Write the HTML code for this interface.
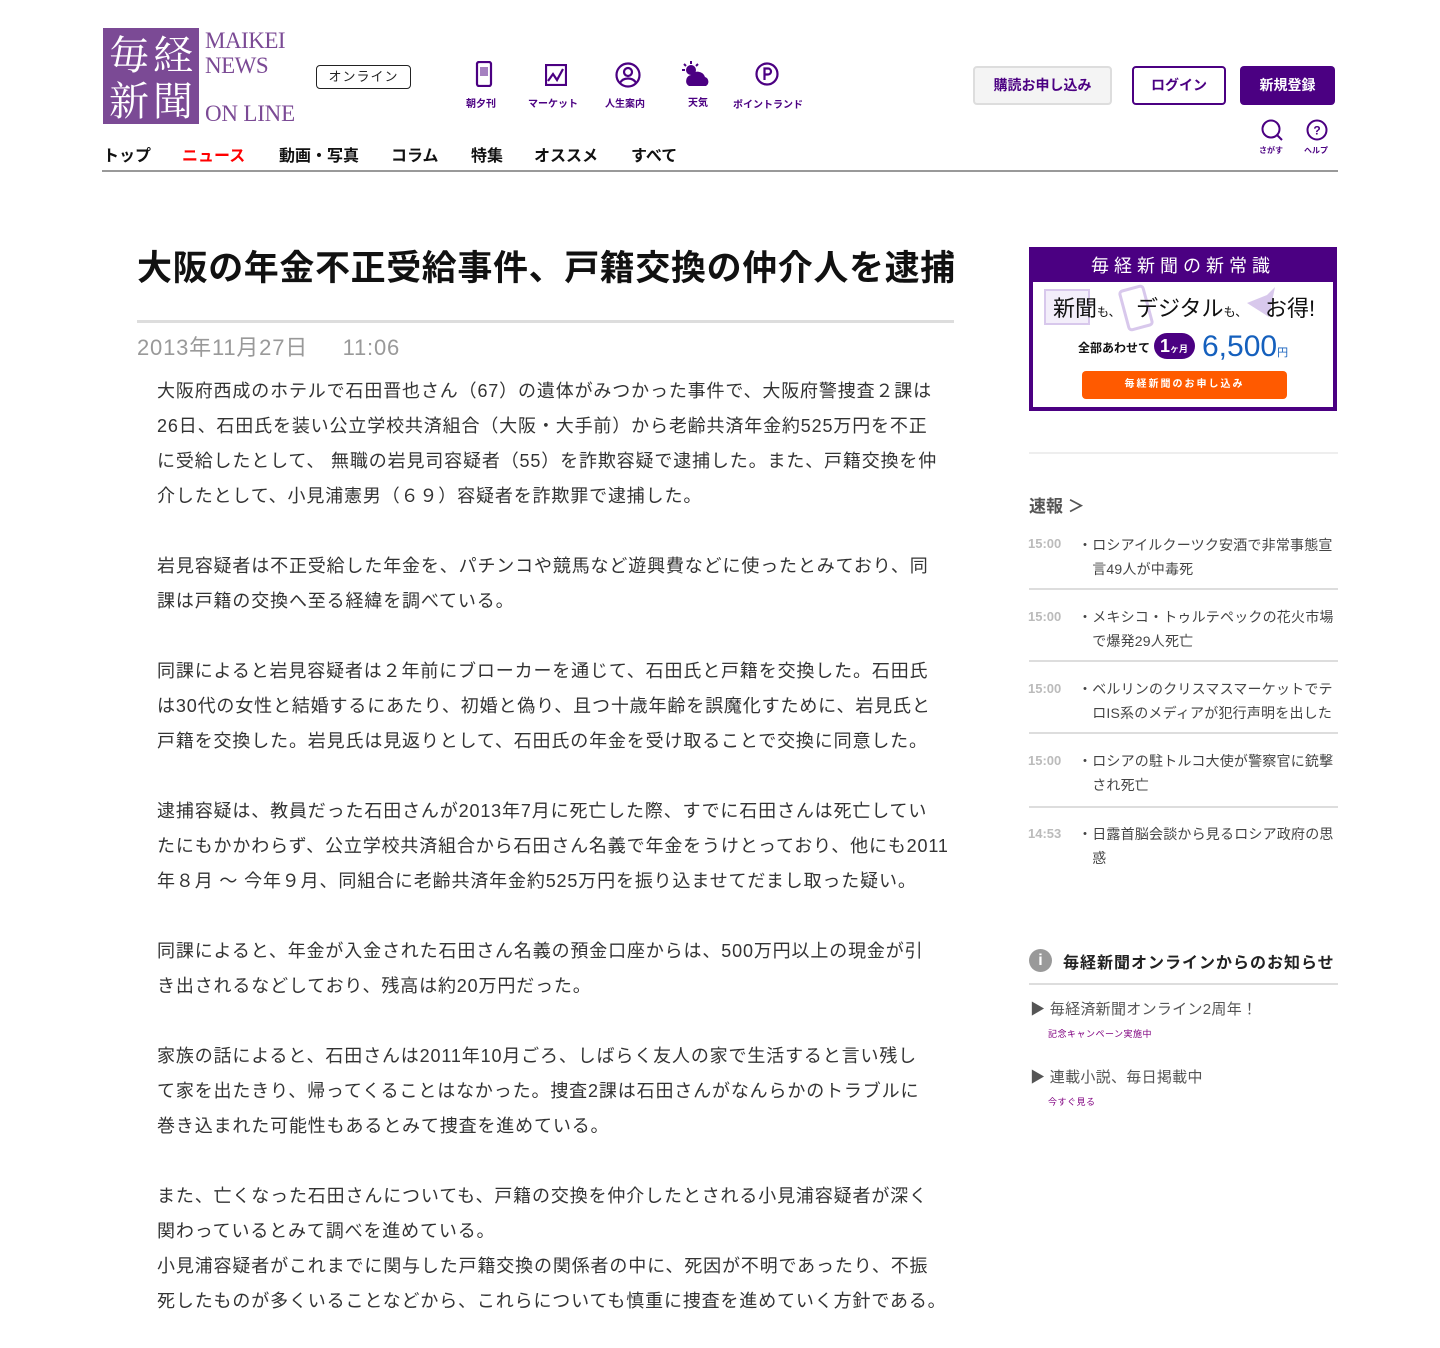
<!DOCTYPE html>
<html><head><meta charset="utf-8"><style>
*{margin:0;padding:0;box-sizing:border-box}
body{width:1440px;height:1348px;background:#fff;font-family:"Liberation Sans","Noto Sans CJK JP",sans-serif;position:relative;overflow:hidden;color:#222}
.a{position:absolute;white-space:nowrap}
.p{color:#4b0082}
</style></head><body>
<!-- logo -->
<div class="a" style="left:103px;top:28px;width:96px;height:96px;background:#7b4a95;color:#fff;font-family:'Noto Serif CJK SC',serif;font-size:40px;line-height:46px;padding:2px 0 0 6px;letter-spacing:4px">毎経<br>新聞</div>
<div class="a" style="left:205px;top:28px;font-family:'Liberation Serif',serif;font-size:23px;line-height:25px;color:#7b4a95;letter-spacing:-0.5px">MAIKEI<br>NEWS</div>
<div class="a" style="left:205px;top:101px;font-family:'Liberation Serif',serif;font-size:23px;color:#7b4a95;letter-spacing:-0.2px">ON LINE</div>
<div class="a" style="left:316px;top:65px;width:95px;height:24px;border:1px solid #222;border-radius:4px;font-size:13px;text-align:center;line-height:22px;letter-spacing:1px">オンライン</div>
<!-- icons -->
<svg class="a" style="left:474px;top:61px" width="20" height="26" viewBox="0 0 20 26" fill="none" stroke="#4b0082" stroke-width="2.2"><rect x="3" y="1" width="14" height="24" rx="2"/><path d="M7 6v9M9 6v9M11 6v9M13 6v9" stroke-width="1"/></svg>
<svg class="a" style="left:545px;top:64px" width="22" height="22" viewBox="0 0 22 22" fill="none" stroke="#4b0082" stroke-width="2.2"><rect x="1" y="1" width="20" height="20"/><path d="M3 17l5-7 4 6 6-11"/></svg>
<svg class="a" style="left:615px;top:62px" width="26" height="26" viewBox="0 0 26 26" fill="none" stroke="#4b0082" stroke-width="2.2"><circle cx="13" cy="13" r="11.5"/><circle cx="13" cy="10" r="4"/><path d="M5 21c3-6 13-6 16 0"/></svg>
<svg class="a" style="left:681px;top:60px" width="30" height="28" viewBox="0 0 30 28"><circle cx="10" cy="10" r="5" fill="#4b0082"/><path d="M10 1v3M3 4l2 2M1 10h3M17 4l-2 2" stroke="#4b0082" stroke-width="2"/><path d="M8 26a6 6 0 0 1 2-11 8 8 0 0 1 14 2 5 5 0 0 1 1 9z" fill="#4b0082"/></svg>
<svg class="a" style="left:755px;top:62px" width="24" height="24" viewBox="0 0 24 24" fill="none" stroke="#4b0082" stroke-width="2.2"><circle cx="12" cy="12" r="10.5"/><path d="M9.5 18V6.5h3.5a3 3 0 0 1 0 6H9.5"/></svg>
<div class="a p" style="left:466px;top:95px;font-size:10px;font-weight:bold">朝夕刊</div>
<div class="a p" style="left:528px;top:95px;font-size:10px;font-weight:bold">マーケット</div>
<div class="a p" style="left:605px;top:95px;font-size:10px;font-weight:bold">人生案内</div>
<div class="a p" style="left:688px;top:94px;font-size:10px;font-weight:bold">天気</div>
<div class="a p" style="left:733px;top:96px;font-size:10px;font-weight:bold">ポイントランド</div>
<!-- buttons -->
<div class="a" style="left:973px;top:66px;width:139px;height:39px;background:#f4f4f4;border:2px solid #ddd;border-radius:4px;text-align:center;line-height:35px;font-size:14px;font-weight:bold;color:#4b0082">購読お申し込み</div>
<div class="a" style="left:1132px;top:66px;width:94px;height:39px;border:2px solid #4b0082;border-radius:4px;text-align:center;line-height:35px;font-size:14px;font-weight:bold;color:#4b0082">ログイン</div>
<div class="a" style="left:1240px;top:66px;width:95px;height:39px;background:#4b0082;border-radius:4px;text-align:center;line-height:39px;font-size:14px;font-weight:bold;color:#fff">新規登録</div>
<svg class="a" style="left:1261px;top:119px" width="24" height="24" viewBox="0 0 24 24" fill="none" stroke="#4b0082" stroke-width="2"><circle cx="10" cy="10" r="8.5"/><path d="M16 16l5 5"/></svg>
<svg class="a" style="left:1306px;top:119px" width="22" height="22" viewBox="0 0 22 22" fill="none" stroke="#4b0082" stroke-width="2"><circle cx="11" cy="11" r="9.5"/><text x="11" y="15.5" font-size="12" font-weight="bold" text-anchor="middle" fill="#4b0082" stroke="none" font-family="Liberation Sans">?</text></svg>
<div class="a p" style="left:1259px;top:145px;font-size:8px;font-weight:bold">さがす</div>
<div class="a p" style="left:1304px;top:145px;font-size:8px;font-weight:bold">ヘルプ</div>
<!-- nav -->
<div class="a" style="left:103px;top:142px;font-size:16px;font-weight:bold;color:#111">トップ</div>
<div class="a" style="left:182px;top:142px;font-size:16px;font-weight:bold;color:#f00">ニュース</div>
<div class="a" style="left:279px;top:142px;font-size:16px;font-weight:bold;color:#111">動画・写真</div>
<div class="a" style="left:391px;top:142px;font-size:16px;font-weight:bold;color:#111">コラム</div>
<div class="a" style="left:471px;top:142px;font-size:16px;font-weight:bold;color:#111">特集</div>
<div class="a" style="left:534px;top:142px;font-size:16px;font-weight:bold;color:#111">オススメ</div>
<div class="a" style="left:631px;top:142px;font-size:16px;font-weight:bold;color:#111">すべて</div>
<div class="a" style="left:102px;top:170px;width:1236px;height:2px;background:#999"></div>
<!-- article -->
<div class="a" style="left:137px;top:240px;font-size:35px;font-weight:bold;color:#111;letter-spacing:0.6px">大阪の年金不正受給事件、戸籍交換の仲介人を逮捕</div>
<div class="a" style="left:137px;top:320px;width:817px;height:3px;background:#ddd"></div>
<div class="a" style="left:137px;top:330px;font-size:22px;color:#999;letter-spacing:0.8px">2013年11月27日&nbsp;&nbsp;&nbsp;&nbsp;&nbsp;11:06</div>
<div class="a" style="left:157px;top:374px;font-size:18px;line-height:35px;color:#333;letter-spacing:0.85px">大阪府西成のホテルで石田晋也さん（67）の遺体がみつかった事件で、大阪府警捜査２課は<br>26日、石田氏を装い公立学校共済組合（大阪・大手前）から老齢共済年金約525万円を不正<br>に受給したとして、 無職の岩見司容疑者（55）を詐欺容疑で逮捕した。また、戸籍交換を仲<br>介したとして、小見浦憲男（６９）容疑者を詐欺罪で逮捕した。<br><br>岩見容疑者は不正受給した年金を、パチンコや競馬など遊興費などに使ったとみており、同<br>課は戸籍の交換へ至る経緯を調べている。<br><br>同課によると岩見容疑者は２年前にブローカーを通じて、石田氏と戸籍を交換した。石田氏<br>は30代の女性と結婚するにあたり、初婚と偽り、且つ十歳年齢を誤魔化すために、岩見氏と<br>戸籍を交換した。岩見氏は見返りとして、石田氏の年金を受け取ることで交換に同意した。<br><br>逮捕容疑は、教員だった石田さんが2013年7月に死亡した際、すでに石田さんは死亡してい<br>たにもかかわらず、公立学校共済組合から石田さん名義で年金をうけとっており、他にも2011<br>年８月 ～ 今年９月、同組合に老齢共済年金約525万円を振り込ませてだまし取った疑い。<br><br>同課によると、年金が入金された石田さん名義の預金口座からは、500万円以上の現金が引<br>き出されるなどしており、残高は約20万円だった。<br><br>家族の話によると、石田さんは2011年10月ごろ、しばらく友人の家で生活すると言い残し<br>て家を出たきり、帰ってくることはなかった。捜査2課は石田さんがなんらかのトラブルに<br>巻き込まれた可能性もあるとみて捜査を進めている。<br><br>また、亡くなった石田さんについても、戸籍の交換を仲介したとされる小見浦容疑者が深く<br>関わっているとみて調べを進めている。<br>小見浦容疑者がこれまでに関与した戸籍交換の関係者の中に、死因が不明であったり、不振<br>死したものが多くいることなどから、これらについても慎重に捜査を進めていく方針である。</div>
<!-- ad -->
<div class="a" style="left:1029px;top:247px;width:308px;height:164px;background:#4b0082"></div>
<div class="a" style="left:1029px;top:252px;width:308px;text-align:center;color:#fff;font-size:18px;letter-spacing:5px">毎経新聞の新常識</div>
<div class="a" style="left:1033px;top:282px;width:300px;height:125px;background:#fff"></div>
<div class="a" style="left:1044px;top:289px;width:46px;height:36px;border:2px solid #d8c8ec;background:#f3eefa"></div>
<svg class="a" style="left:1118px;top:284px" width="40" height="48" viewBox="0 0 40 48"><rect x="6" y="4" width="24" height="40" rx="3" transform="rotate(-15 18 24)" fill="none" stroke="#d8c8ec" stroke-width="3"/></svg>
<svg class="a" style="left:1245px;top:285px" width="35" height="40" viewBox="0 0 35 40"><path d="M2 18l20-8 8-8-6 30z" fill="#d8c8ec"/></svg>
<div class="a" style="left:1053px;top:291px;font-size:22px;color:#111">新聞<span style="font-size:12px">も、</span></div>
<div class="a" style="left:1136px;top:291px;font-size:22px;color:#111">デジタル<span style="font-size:12px">も、</span></div>
<div class="a" style="left:1265px;top:291px;font-size:22px;color:#111">お得!</div>
<div class="a" style="left:1078px;top:339px;font-size:12px;font-weight:bold;color:#111">全部あわせて</div>
<div class="a" style="left:1154px;top:333px;width:41px;height:26px;border-radius:13px;background:#4b0082;color:#fff;font-size:18px;font-weight:bold;line-height:26px;padding-left:6px">1<span style="font-size:9px">ヶ月</span></div>
<div class="a" style="left:1202px;top:330px;font-size:30px;color:#1560bd">6,500<span style="font-size:11px">円</span></div>
<div class="a" style="left:1082px;top:371px;width:205px;height:28px;background:#ff5a00;border-radius:4px;color:#fff;font-size:10px;text-align:center;line-height:28px;letter-spacing:2px;font-weight:bold">毎経新聞のお申し込み</div>
<div class="a" style="left:1029px;top:452px;width:309px;height:2px;background:#eee"></div>
<!-- 速報 -->
<div class="a" style="left:1029px;top:492px;font-size:17px;font-weight:bold;color:#555">速報 ＞</div>
<div class="a" style="left:1028px;top:536px;font-size:13px;font-weight:bold;color:#bbb">15:00</div>
<div class="a" style="left:1078px;top:533px;font-size:14px;line-height:24px;color:#444;letter-spacing:0.2px">・ロシアイルクーツク安酒で非常事態宣<br>　言49人が中毒死</div>
<div class="a" style="left:1029px;top:588px;width:309px;height:2px;background:#ddd"></div>
<div class="a" style="left:1028px;top:609px;font-size:13px;font-weight:bold;color:#bbb">15:00</div>
<div class="a" style="left:1078px;top:605px;font-size:14px;line-height:24px;color:#444;letter-spacing:0.2px">・メキシコ・トゥルテペックの花火市場<br>　で爆発29人死亡</div>
<div class="a" style="left:1029px;top:660px;width:309px;height:2px;background:#ddd"></div>
<div class="a" style="left:1028px;top:681px;font-size:13px;font-weight:bold;color:#bbb">15:00</div>
<div class="a" style="left:1078px;top:677px;font-size:14px;line-height:24px;color:#444;letter-spacing:0.2px">・ベルリンのクリスマスマーケットでテ<br>　ロIS系のメディアが犯行声明を出した</div>
<div class="a" style="left:1029px;top:732px;width:309px;height:2px;background:#ddd"></div>
<div class="a" style="left:1028px;top:753px;font-size:13px;font-weight:bold;color:#bbb">15:00</div>
<div class="a" style="left:1078px;top:749px;font-size:14px;line-height:24px;color:#444;letter-spacing:0.2px">・ロシアの駐トルコ大使が警察官に銃撃<br>　され死亡</div>
<div class="a" style="left:1029px;top:806px;width:309px;height:2px;background:#ddd"></div>
<div class="a" style="left:1028px;top:826px;font-size:13px;font-weight:bold;color:#bbb">14:53</div>
<div class="a" style="left:1078px;top:822px;font-size:14px;line-height:24px;color:#444;letter-spacing:0.2px">・日露首脳会談から見るロシア政府の思<br>　惑</div>
<!-- info -->
<div class="a" style="left:1029px;top:949px;width:23px;height:23px;border-radius:50%;background:#999;color:#fff;font-weight:bold;font-size:16px;text-align:center;line-height:23px">i</div>
<div class="a" style="left:1063px;top:949px;font-size:16px;font-weight:bold;color:#222;letter-spacing:1px">毎経新聞オンラインからのお知らせ</div>
<div class="a" style="left:1029px;top:983px;width:309px;height:2px;background:#ddd"></div>
<div class="a" style="left:1030px;top:998px;font-size:15px;color:#555;letter-spacing:0.3px">▶ 毎経済新聞オンライン2周年！</div>
<div class="a" style="left:1048px;top:1027px;font-size:9px;color:#800080;letter-spacing:0.5px">記念キャンペーン実施中</div>
<div class="a" style="left:1030px;top:1066px;font-size:15px;color:#555;letter-spacing:0.3px">▶ 連載小説、毎日掲載中</div>
<div class="a" style="left:1048px;top:1095px;font-size:9px;color:#800080;letter-spacing:0.5px">今すぐ見る</div>
</body></html>
